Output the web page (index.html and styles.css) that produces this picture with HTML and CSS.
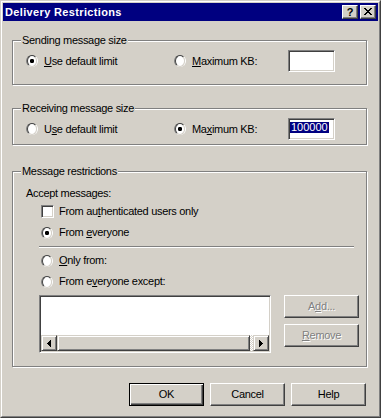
FILE: index.html
```html
<!DOCTYPE html>
<html>
<head>
<meta charset="utf-8">
<title>Delivery Restrictions</title>
<link rel="stylesheet" href="styles.css">
</head>
<body>
<div class="window">
  <div class="frame">
    <div class="caption">
      <span class="title">Delivery Restrictions</span>
      <div class="capbtns">
        <span class="capbtn help">?</span>
        <span class="capbtn close">
          <svg width="8" height="7" viewBox="0 0 8 7"><path d="M0 0h2v1h-2zM6 0h2v1h-2zM1 1h2v1h-2zM5 1h2v1h-2zM2 2h4v1h-4zM3 3h2v1h-2zM2 4h4v1h-4zM1 5h2v1h-2zM5 5h2v1h-2zM0 6h2v1h-2zM6 6h2v1h-2z" fill="#000"/></svg>
        </span>
      </div>
    </div>
    <div class="client">
      <fieldset class="group g1">
        <legend>Sending message size</legend>
        <div class="gbody b1">
          <div class="sizerow">
            <div class="opt c1"><span class="radio on"></span><span><u>U</u>se default limit</span></div>
            <div class="opt c2"><span class="radio"></span><span><u>M</u>aximum KB:</span></div>
            <div class="edit"></div>
          </div>
        </div>
      </fieldset>

      <fieldset class="group g2">
        <legend>Receiving message size</legend>
        <div class="gbody b2">
          <div class="sizerow">
            <div class="opt c1"><span class="radio"></span><span>U<u>s</u>e default limit</span></div>
            <div class="opt c2"><span class="radio on"></span><span>Ma<u>x</u>imum KB:</span></div>
            <div class="edit"><span class="sel">100000</span></div>
          </div>
        </div>
      </fieldset>

      <fieldset class="group g3">
        <legend>Message restrictions</legend>
        <div class="gbody b3">
          <div class="accept">Accept messages:</div>
          <div class="opts">
            <div class="opt row first"><span class="check"></span><span>From au<u>t</u>henticated users only</span></div>
            <div class="opt row"><span class="radio on"></span><span>From <u>e</u>veryone</span></div>
            <div class="sep"></div>
            <div class="opt row r3"><span class="radio"></span><span><u>O</u>nly from:</span></div>
            <div class="opt row"><span class="radio"></span><span>From e<u>v</u>eryone except:</span></div>
            <div class="listrow">
              <div class="listbox">
                <div class="hscroll">
                  <span class="sbtn"><svg width="4" height="7" viewBox="0 0 4 7"><path d="M3 0h1v7h-1zM2 1h1v5h-1zM1 2h1v3h-1zM0 3h1v1h-1z" fill="#000"/></svg></span>
                  <span class="track"><span class="thumb"></span></span>
                  <span class="sbtn"><svg width="4" height="7" viewBox="0 0 4 7"><path d="M0 0h1v7h-1zM1 1h1v5h-1zM2 2h1v3h-1zM3 3h1v1h-1z" fill="#000"/></svg></span>
                </div>
              </div>
              <div class="sidebtns">
                <div class="btn disabled">A<u>d</u>d...</div>
                <div class="btn disabled"><u>R</u>emove</div>
              </div>
            </div>
          </div>
        </div>
      </fieldset>

      <div class="buttons">
        <div class="btn default">OK</div>
        <div class="btn">Cancel</div>
        <div class="btn">Help</div>
      </div>
    </div>
  </div>
</div>
</body>
</html>
```

FILE: styles.css
```css
* { box-sizing: border-box; }
html, body { margin: 0; padding: 0; }
body {
  background: #d4d0c8;
  font-family: "Liberation Sans", Arial, sans-serif;
  font-size: 11px;
  line-height: 13px;
  letter-spacing: -0.3px;
  color: #000;
}
u { text-decoration-thickness: 1px; text-underline-offset: 1px; }

.window {
  width: 381px;
  height: 418px;
  border: 1px solid;
  border-color: #d4d0c8 #404040 #404040 #d4d0c8;
  background: #d4d0c8;
}
.frame {
  height: 100%;
  border: 1px solid;
  border-color: #fff #808080 #808080 #fff;
  padding: 1px;
  display: flex;
  flex-direction: column;
}
.caption {
  flex: none;
  height: 18px;
  background: #000080;
  display: flex;
  align-items: center;
  justify-content: space-between;
  padding: 0 2px;
}
.title {
  color: #fff;
  font-weight: bold;
  letter-spacing: 0.35px;
  line-height: 18px;
}
.capbtns { display: flex; gap: 2px; }
.capbtn {
  width: 16px;
  height: 14px;
  background: #d4d0c8;
  border: 1px solid;
  border-color: #fff #404040 #404040 #fff;
  box-shadow: inset -1px -1px #808080;
  display: flex;
  justify-content: center;
  align-items: flex-start;
}
.capbtn.help {
  font-weight: bold;
  font-size: 11px;
  line-height: 12px;
  letter-spacing: 0;
}
.capbtn.close { padding-top: 2px; }
.capbtn svg { display: block; }

.client { padding-left: 9px; margin-top: 1px; }

.group {
  width: 355px;
  margin: 0;
  padding: 0;
  min-width: 0;
  border: 1px solid #808080;
  box-shadow: inset 1px 1px #fff, 1px 1px #fff;
}
.group legend {
  margin-left: 8px;
  padding: 0 1px;
  line-height: 13px;
  background: #d4d0c8;
}
.g1 { margin-top: 12px; }
.g2 { margin-top: 17px; }
.g3 { margin-top: 20px; }

.b1 { padding: 3px 0 12px 13px; }
.b2 { padding: 3px 0 4px 13px; }
.b3 { padding: 9px 7px 13px 13px; }

.sizerow { display: flex; align-items: center; height: 22px; }
.opt { display: flex; align-items: center; gap: 6px; white-space: nowrap; }
.c1 { width: 148px; }
.c2 { width: 114px; }

.radio {
  flex: none;
  width: 12px;
  height: 12px;
  border-radius: 50%;
  border: 1px solid;
  border-color: #808080 #fff #fff #808080;
  display: flex;
  align-items: center;
  justify-content: center;
}
.radio::before {
  content: "";
  width: 10px;
  height: 10px;
  border-radius: 50%;
  border: 1px solid;
  border-color: #404040 #d4d0c8 #d4d0c8 #404040;
  background: #fff;
}
.radio.on::before {
  background: radial-gradient(circle at 50% 50%, #000 0 2px, #fff 2.3px);
}
.check {
  flex: none;
  width: 13px;
  height: 13px;
  background: #fff;
  border: 1px solid;
  border-color: #808080 #fff #fff #808080;
  box-shadow: inset 1px 1px #404040, inset -1px -1px #d4d0c8;
}
.edit {
  width: 47px;
  height: 22px;
  background: #fff;
  border: 1px solid;
  border-color: #808080 #fff #fff #808080;
  box-shadow: inset 1px 1px #404040, inset -1px -1px #d4d0c8;
  padding: 3px 0 0 1px;
  display: flex;
  align-items: flex-start;
}
.sel {
  background: #000080;
  color: #fff;
  line-height: 11px;
  height: 11px;
  padding: 0 1px;
  letter-spacing: 0;
}

.accept { line-height: 13px; }
.opts { margin-left: 15px; }
.row { height: 21px; }
.row .check + span { margin-left: -1px; }
.first { margin-top: 1px; }
.sep {
  height: 2px;
  margin: 3px 5px 0 -2px;
  border-top: 1px solid #808080;
  border-bottom: 1px solid #fff;
}
.r3 { margin-top: 2px; }

.listrow { display: flex; margin: 3px 0 0 -2px; }
.listbox {
  width: 232px;
  height: 58px;
  background: #fff;
  border: 1px solid;
  border-color: #808080 #fff #fff #808080;
  box-shadow: inset 1px 1px #404040, inset -1px -1px #d4d0c8;
  padding: 1px;
  display: flex;
  flex-direction: column;
  justify-content: flex-end;
}
.hscroll { height: 16px; display: flex; }
.sbtn, .thumb {
  background: #d4d0c8;
  border: 1px solid;
  border-color: #d4d0c8 #404040 #404040 #d4d0c8;
  box-shadow: inset 1px 1px #fff, inset -1px -1px #808080;
}
.sbtn {
  flex: none;
  width: 16px;
  height: 16px;
  display: flex;
  align-items: center;
  justify-content: center;
}
.sbtn svg { display: block; }
.track {
  flex: 1;
  display: flex;
  background-color: #d4d0c8;
  background-image: conic-gradient(#fff 25%, #d4d0c8 0 50%, #fff 0 75%, #d4d0c8 0);
  background-size: 2px 2px;
}
.thumb { width: calc(100% - 3px); height: 16px; }

.sidebtns {
  margin-left: 13px;
  display: flex;
  flex-direction: column;
  gap: 6px;
}

.btn {
  width: 75px;
  height: 23px;
  border: 1px solid;
  border-color: #fff #404040 #404040 #fff;
  box-shadow: inset -1px -1px #808080;
  display: flex;
  align-items: center;
  justify-content: center;
  white-space: nowrap;
}
.btn.default {
  border-color: #000;
  box-shadow: inset 1px 1px #fff, inset -1px -1px #404040, inset -2px -2px #808080;
}
.btn.disabled {
  color: #808080;
  text-shadow: 1px 1px 0 #fff;
}

.buttons {
  width: 354px;
  margin-top: 16px;
  display: flex;
  justify-content: flex-end;
  gap: 6px;
}
```
